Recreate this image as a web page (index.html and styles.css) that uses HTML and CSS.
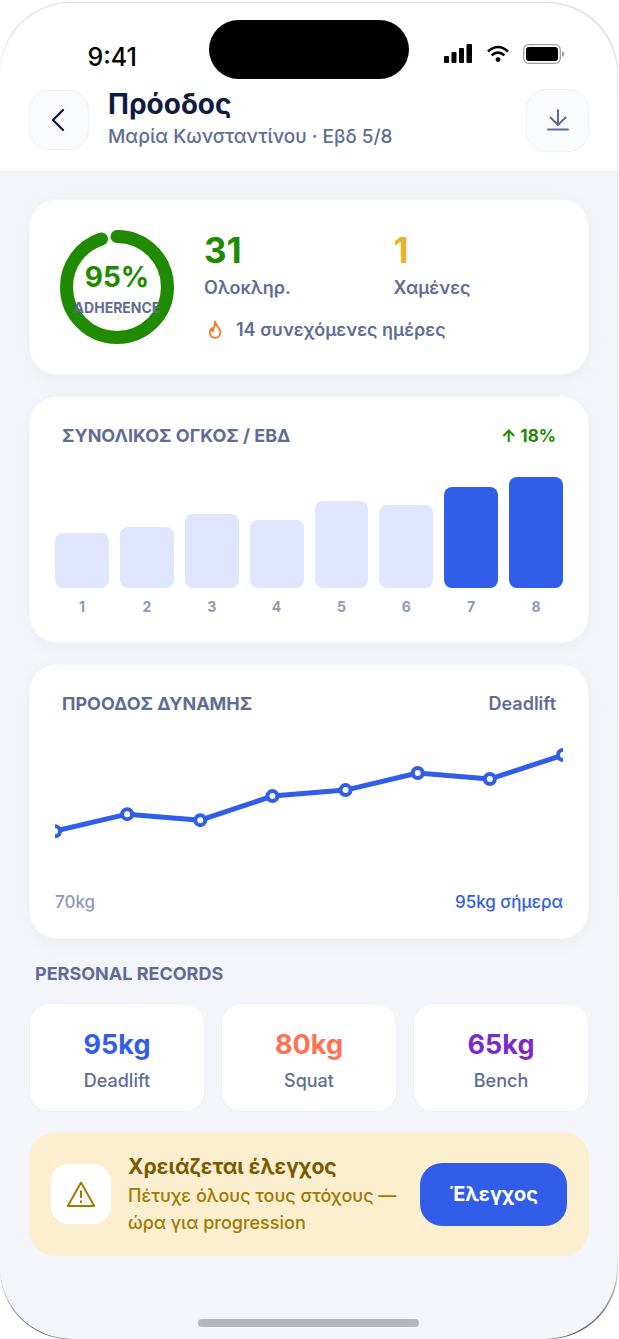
FILE: index.html
```
<!DOCTYPE html>
<html lang="el">
<head>
    <meta charset="UTF-8">
    <meta name="viewport" content="width=device-width, initial-scale=1.0">
    <title>Πρόοδος</title>
    <link rel="stylesheet" href="styles.css">
</head>
<body>
    <div class="phone">
        <div class="screen">
            <div class="status-bar">
                <span class="time">9:41</span>
                <div class="island"></div>
                <div class="status-icons">
                    <svg width="29" height="20" viewBox="0 0 29 20">
                        <rect x="0" y="12" width="5" height="7" rx="1"/>
                        <rect x="7.500" y="8" width="5" height="11" rx="1"/>
                        <rect x="15" y="4" width="5" height="15" rx="1"/>
                        <rect x="22.500" y="0" width="5.500" height="19" rx="1"/>
                    </svg>
                    <svg width="22" height="20" viewBox="0 0 22 20" fill="none" stroke="#000" stroke-width="2.6">
                        <path d="M1 7.5Q11-1.5 21 7.5M4.6 11.4Q11 5.6 17.4 11.4"/>
                        <circle cx="11" cy="15.6" r="2.4" fill="#000" stroke="none"/>
                    </svg>
                    <svg width="42" height="20" viewBox="0 0 42 20">
                        <rect x="0.7" y="0.7" width="36.6" height="18.6" rx="5" fill="none" stroke="#a0a0a0" stroke-width="1.3"/>
                        <rect x="3" y="3" width="32" height="14" rx="3"/>
                        <path d="M39 7.2c3 .8 3 4.8 0 5.6z" fill="#a0a0a0"/>
                    </svg>
                </div>
            </div>

            <header class="header">
                <button class="icon-button back" type="button" aria-label="Πίσω">
                    <svg width="24" height="24" viewBox="0 0 24 24"><path d="M16 2 6 12l10 10"/></svg>
                </button>
                <div class="heading">
                    <h1>Πρόοδος</h1>
                    <p>Μαρία Κωνσταντίνου · Εβδ 5/8</p>
                </div>
                <button class="icon-button download" type="button" aria-label="Λήψη">
                    <svg width="24" height="24" viewBox="0 0 24 24"><path d="M12 2v14M4.500 9.500 12 17l7.500-7.500M2 21.500h20"/></svg>
                </button>
            </header>

            <main>
                <section class="card summary">
                    <div class="ring">
                        <svg viewBox="0 0 114 114">
                            <circle cx="57" cy="57" r="50.5" class="ring-track"/>
                            <circle cx="57" cy="57" r="50.5" class="ring-value" pathLength="100" stroke-dasharray="95 100" transform="rotate(-90 57 57)"/>
                        </svg>
                        <div class="ring-text">
                            <strong>95%</strong>
                            <span>ADHERENCE</span>
                        </div>
                    </div>
                    <div class="stats">
                        <div class="stat">
                            <strong class="green">31</strong>
                            <span>Ολοκληρ.</span>
                        </div>
                        <div class="stat">
                            <strong class="amber">1</strong>
                            <span>Χαμένες</span>
                        </div>
                        <div class="streak">
                            <svg width="22" height="22" viewBox="0 0 22 22">
                                <path d="M11 2.500C11.500 6 9.400 8 9 12.200 7.800 11.800 7.400 10.600 7.600 9.200 6.200 10.600 5.800 12.200 5.800 13.600a5.300 5.300 0 0 0 10.600 0c0-2.800-1.400-4.400-2.700-6C12.400 6.100 11.800 4.500 11 2.500z"/>
                            </svg>
                            <span>14 συνεχόμενες ημέρες</span>
                        </div>
                    </div>
                </section>

                <section class="card volume">
                    <div class="card-head">
                        <h2>ΣΥΝΟΛΙΚΟΣ ΟΓΚΟΣ / ΕΒΔ</h2>
                        <span class="trend">↑ 18%</span>
                    </div>
                    <div class="bars">
                        <div class="bar" style="height: 50%"></div>
                        <div class="bar" style="height: 55%"></div>
                        <div class="bar" style="height: 67%"></div>
                        <div class="bar" style="height: 61%"></div>
                        <div class="bar" style="height: 78%"></div>
                        <div class="bar" style="height: 75%"></div>
                        <div class="bar active" style="height: 91%"></div>
                        <div class="bar active" style="height: 100%"></div>
                    </div>
                    <div class="weeks">
                        <span>1</span><span>2</span><span>3</span><span>4</span>
                        <span>5</span><span>6</span><span>7</span><span>8</span>
                    </div>
                </section>

                <section class="card strength">
                    <div class="card-head">
                        <h2>ΠΡΟΟΔΟΣ ΔΥΝΑΜΗΣ</h2>
                        <span>Deadlift</span>
                    </div>
                    <svg class="line-chart" viewBox="0 0 507 140">
                        <polyline points="0,91 72,74 145,80 217,56 290,50 362,33 434,39 507,15"/>
                        <circle cx="0" cy="91" r="5"/>
                        <circle cx="72" cy="74" r="5"/>
                        <circle cx="145" cy="80" r="5"/>
                        <circle cx="217" cy="56" r="5"/>
                        <circle cx="290" cy="50" r="5"/>
                        <circle cx="362" cy="33" r="5"/>
                        <circle cx="434" cy="39" r="5"/>
                        <circle cx="507" cy="15" r="5"/>
                    </svg>
                    <div class="chart-foot">
                        <span>70kg</span>
                        <span class="today">95kg σήμερα</span>
                    </div>
                </section>

                <h2 class="section-title">PERSONAL RECORDS</h2>
                <div class="records">
                    <div class="record">
                        <strong class="blue">95kg</strong>
                        <span>Deadlift</span>
                    </div>
                    <div class="record">
                        <strong class="coral">80kg</strong>
                        <span>Squat</span>
                    </div>
                    <div class="record">
                        <strong class="purple">65kg</strong>
                        <span>Bench</span>
                    </div>
                </div>

                <section class="alert">
                    <div class="alert-icon">
                        <svg width="30" height="30" viewBox="0 0 30 30">
                            <path d="M15 3.500 28.200 27H1.800z"/>
                            <path d="M15 11.500v7.500M15 21.500v2.500"/>
                        </svg>
                    </div>
                    <div class="alert-text">
                        <h3>Χρειάζεται έλεγχος</h3>
                        <p>Πέτυχε όλους τους στόχους — ώρα για progression</p>
                    </div>
                    <button class="check-button" type="button">Έλεγχος</button>
                </section>
            </main>

            <div class="home-indicator"></div>
        </div>
    </div>
</body>
</html>
```

FILE: styles.css
```
* {
    box-sizing: border-box;
}

body {
    margin: 0;
    background: #fff;
    color: #5f6d96;
    font-family: Inter, "Noto Sans", sans-serif;
}

h1, h2, h3, p {
    margin: 0;
}

button {
    font-family: inherit;
    cursor: pointer;
}

.phone {
    margin: 2px 1px 0 0;
    padding: 1px 1px 0 0;
    border-radius: 70px;
    background: linear-gradient(to bottom, #e4e4e6, #ececee 94%, #555);
}

.screen {
    display: flex;
    flex-direction: column;
    min-height: calc(100vh - 3px);
    border-radius: 72px;
    background: #f4f5fa;
    overflow: hidden;
}

/* status bar */
.status-bar {
    display: grid;
    grid-template-columns: 1fr 200px 1fr;
    height: 84px;
    padding-top: 17px;
    background: #fff;
}

.time {
    padding: 5px 0 0 16px;
    color: #000;
    font-size: 25px;
    font-weight: 500;
    line-height: 64px;
    text-align: center;
}

.island {
    height: 59px;
    border-radius: 30px;
    background: #000;
}

.status-icons {
    display: flex;
    justify-content: center;
    gap: 14px;
    padding: 24px 16px 0 0;
}

/* header */
.header {
    display: flex;
    align-items: center;
    padding: 0 28px 18px 29px;
    border-bottom: 1px solid #f0f1f7;
    background: #fff;
}

.icon-button {
    display: flex;
    align-items: center;
    justify-content: center;
    width: 60px;
    height: 60px;
    padding: 0;
    border: 1px solid #eff0f8;
    border-radius: 20px;
    background: #fafbfe;
}

.icon-button svg {
    fill: none;
    stroke: #0f1b40;
    stroke-width: 2.3;
    stroke-linecap: round;
    stroke-linejoin: round;
}

.download {
    width: 63px;
    height: 63px;
}

.download svg {
    stroke: #5f6d96;
    stroke-width: 2;
}

.heading {
    flex: 1;
    padding-left: 19px;
}

.heading h1 {
    color: #0f1b40;
    font-size: 28px;
    font-weight: 700;
    line-height: 34px;
}

.heading p {
    font-size: 19px;
    font-weight: 500;
    line-height: 32px;
}

main {
    padding: 27px 28px 0 29px;
}

/* cards */
.card {
    margin-bottom: 21px;
    padding: 25px;
    border: 1px solid #f7f8fc;
    border-radius: 28px;
    background: #fff;
    box-shadow: 0 4px 20px rgba(30, 30, 80, 0.04);
}

.summary {
    display: flex;
    align-items: center;
    gap: 30px;
    padding: 28px 29px 28px 30px;
}

.ring {
    display: grid;
    flex: none;
    width: 114px;
    height: 114px;
}

.ring > * {
    grid-area: 1 / 1;
}

.ring circle {
    fill: none;
    stroke-width: 13;
}

.ring-track {
    stroke: #f0f1f7;
}

.ring-value {
    stroke: #208a00;
    stroke-linecap: round;
}

.ring-text {
    z-index: 1;
    display: flex;
    flex-direction: column;
    align-items: center;
    justify-content: center;
    padding-top: 6px;
}

.ring-text strong {
    color: #208a00;
    font-size: 28px;
    line-height: 36px;
}

.ring-text span {
    font-size: 14px;
    font-weight: 700;
    line-height: 26px;
}

.stats {
    display: grid;
    flex: 1;
    grid-template-columns: 1fr 1fr;
    column-gap: 24px;
}

.stat {
    display: flex;
    flex-direction: column;
}

.stat strong {
    font-size: 35px;
    line-height: 44px;
}

.stat span,
.streak {
    font-size: 18px;
    font-weight: 600;
    line-height: 32px;
}

.streak {
    display: flex;
    grid-column: 1 / 3;
    align-items: center;
    gap: 10px;
    padding-top: 10px;
}

.streak svg {
    fill: none;
    stroke: #ff7420;
    stroke-width: 1.800;
    stroke-linejoin: round;
}

.card-head {
    display: flex;
    align-items: center;
    justify-content: space-between;
    padding: 0 7px;
    font-size: 18px;
    font-weight: 600;
    line-height: 28px;
}

.card-head h2,
.section-title {
    font-size: 18px;
    font-weight: 700;
    line-height: 28px;
}

.card-head .trend {
    color: #208a00;
    font-size: 17px;
    font-weight: 700;
}

.bars {
    display: flex;
    align-items: flex-end;
    gap: 11px;
    height: 111px;
    margin-top: 27px;
}

.bar {
    flex: 1;
    border-radius: 8px;
    background: #e0e6fd;
}

.bar.active {
    background: #315de8;
}

.weeks {
    display: flex;
    gap: 11px;
    padding-top: 8px;
    color: #8e9aba;
    font-size: 14px;
    font-weight: 700;
    line-height: 21px;
}

.weeks span {
    flex: 1;
    text-align: center;
}

.strength {
    padding-bottom: 23px;
}

.line-chart {
    display: block;
    width: 100%;
    margin-top: 22px;
    overflow: hidden;
}

.line-chart polyline {
    fill: none;
    stroke: #315de8;
    stroke-width: 5;
    stroke-linejoin: round;
}

.line-chart circle {
    fill: #fff;
    stroke: #315de8;
    stroke-width: 4;
}

.chart-foot {
    display: flex;
    justify-content: space-between;
    padding-top: 9px;
    color: #8e9aba;
    font-size: 17px;
    font-weight: 500;
    line-height: 26px;
}

.chart-foot .today {
    color: #315de8;
}

/* personal records */
.section-title {
    padding-left: 6px;
}

.records {
    display: grid;
    grid-template-columns: repeat(3, 1fr);
    gap: 16px;
    margin-top: 15px;
}

.record {
    display: flex;
    flex-direction: column;
    align-items: center;
    padding: 21px 8px 14px;
    border: 1px solid #eff1f8;
    border-radius: 21px;
    background: #fff;
}

.record strong {
    font-size: 27px;
    line-height: 40px;
}

.record span {
    font-size: 18px;
    font-weight: 500;
    line-height: 32px;
}

.green {
    color: #208a00;
}

.amber {
    color: #ebb22a;
}

.blue {
    color: #315de8;
}

.coral {
    color: #ff7055;
}

.purple {
    color: #7a2bca;
}

/* review alert */
.alert {
    display: flex;
    align-items: center;
    margin-top: 20px;
    padding: 20px 22px;
    border-radius: 26px;
    background: #fbefd0;
}

.alert-icon {
    display: flex;
    flex: none;
    align-items: center;
    justify-content: center;
    width: 60px;
    height: 60px;
    border-radius: 18px;
    background: #fff;
}

.alert-icon svg {
    fill: none;
    stroke: #a27900;
    stroke-width: 2;
    stroke-linejoin: round;
}

.alert-text {
    flex: 1;
    padding: 0 16px 0 17px;
    color: #a27900;
}

.alert-text h3 {
    color: #7a5900;
    font-size: 21px;
    line-height: 30px;
}

.alert-text p {
    font-size: 18px;
    font-weight: 500;
    line-height: 27px;
}

.check-button {
    flex: none;
    height: 63px;
    padding: 0 29px;
    border: 0;
    border-radius: 22px;
    background: #315de8;
    color: #fff;
    font-size: 20px;
    font-weight: 700;
}

.home-indicator {
    width: 221px;
    height: 8px;
    margin: auto auto 12px;
    border-radius: 4px;
    background: #b5b6ba;
}
```
